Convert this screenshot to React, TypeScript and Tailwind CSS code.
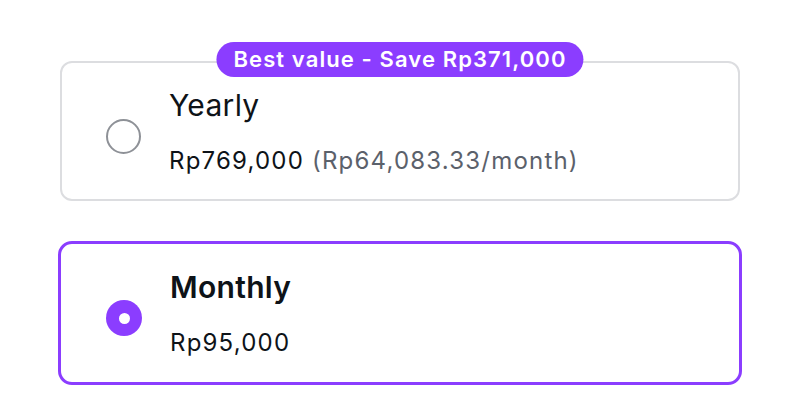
import React, { useState } from 'react';

type Plan = {
  id: string;
  name: string;
  price: string;
  perMonth?: string;
  badge?: string;
};

const plans: Plan[] = [
  {
    id: 'yearly',
    name: 'Yearly',
    price: 'Rp769,000',
    perMonth: '(Rp64,083.33/month)',
    badge: 'Best value - Save Rp371,000',
  },
  { id: 'monthly', name: 'Monthly', price: 'Rp95,000' },
];

const App: React.FC = () => {
  const [selected, setSelected] = useState('monthly');

  return (
    <div
      className="min-h-screen w-[800px] h-[420px] bg-white text-[#0e1318] pt-[61px] px-[60px]"
      style={{ fontFamily: 'Inter, "Noto Sans", sans-serif' }}
    >
      <div className="flex flex-col gap-10">
        {plans.map((plan) => {
          const active = selected === plan.id;
          return (
            <button
              key={plan.id}
              onClick={() => setSelected(plan.id)}
              className={
                active
                  ? 'relative -mx-[2px] flex items-center h-[144px] rounded-[14px] border-[3px] border-[#8b3dff] pl-[45px] text-left'
                  : 'relative flex items-center h-[140px] rounded-[12px] border-2 border-[#dcdde0] pl-[44px] text-left'
              }
            >
              {plan.badge && (
                <span className="absolute left-1/2 -translate-x-1/2 -top-[21px] h-[35px] flex items-center rounded-full bg-[#8b3dff] px-[17px] text-[22px] font-semibold tracking-[0.05em] text-white whitespace-nowrap">
                  {plan.badge}
                </span>
              )}
              {active ? (
                <span className="mt-[10px] w-[36px] h-[36px] shrink-0 rounded-full bg-[#8b3dff] flex items-center justify-center">
                  <span className="w-[11px] h-[11px] rounded-full bg-white" />
                </span>
              ) : (
                <span className="mt-[10px] w-[35px] h-[35px] shrink-0 rounded-full border-2 border-[#8e9197]" />
              )}
              <div className="ml-[28px] flex flex-col gap-[20px]">
                <span
                  className={
                    active
                      ? 'text-[30px] leading-[40px] font-semibold tracking-[0.01em]'
                      : 'text-[30px] leading-[40px] tracking-[0.01em]'
                  }
                >
                  {plan.name}
                </span>
                <span className="text-[24px] leading-[32px] tracking-[0.05em]">
                  {plan.price}
                  {plan.perMonth && <span className="text-[#5b616b]"> {plan.perMonth}</span>}
                </span>
              </div>
            </button>
          );
        })}
      </div>
    </div>
  );
};

export default App;
